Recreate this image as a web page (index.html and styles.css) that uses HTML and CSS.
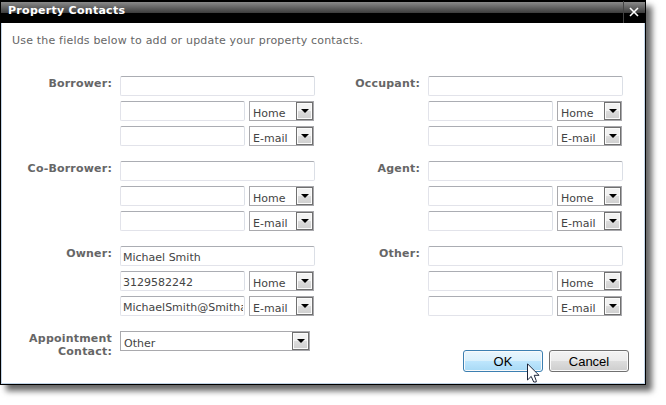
FILE: index.html
```html
<!DOCTYPE html>
<html lang="en">
<head>
    <meta charset="UTF-8">
    <title>Property Contacts</title>
    <link rel="stylesheet" href="styles.css">
</head>
<body>
    <div class="dialog">
        <div class="dialog-header">
            <div class="dialog-title">Property Contacts</div>
            <div class="dialog-close">
                <svg width="10" height="10" viewBox="0 0 10 10">
                    <path d="M1 1L9 9M9 1L1 9" stroke="#fff" stroke-width="1.6" fill="none"/>
                </svg>
            </div>
        </div>
        <div class="dialog-body">
            <p class="intro">Use the fields below to add or update your property contacts.</p>
            <div class="contacts">
                <div class="contact">
                    <label class="contact-label">Borrower:</label>
                    <div class="fields">
                        <input type="text" class="full">
                        <div class="row"><input type="text"><div class="select"><span>Home</span><i class="drop"></i></div></div>
                        <div class="row"><input type="text"><div class="select"><span>E-mail</span><i class="drop"></i></div></div>
                    </div>
                </div>
                <div class="contact">
                    <label class="contact-label">Occupant:</label>
                    <div class="fields">
                        <input type="text" class="full">
                        <div class="row"><input type="text"><div class="select"><span>Home</span><i class="drop"></i></div></div>
                        <div class="row"><input type="text"><div class="select"><span>E-mail</span><i class="drop"></i></div></div>
                    </div>
                </div>
                <div class="contact">
                    <label class="contact-label">Co-Borrower:</label>
                    <div class="fields">
                        <input type="text" class="full">
                        <div class="row"><input type="text"><div class="select"><span>Home</span><i class="drop"></i></div></div>
                        <div class="row"><input type="text"><div class="select"><span>E-mail</span><i class="drop"></i></div></div>
                    </div>
                </div>
                <div class="contact">
                    <label class="contact-label">Agent:</label>
                    <div class="fields">
                        <input type="text" class="full">
                        <div class="row"><input type="text"><div class="select"><span>Home</span><i class="drop"></i></div></div>
                        <div class="row"><input type="text"><div class="select"><span>E-mail</span><i class="drop"></i></div></div>
                    </div>
                </div>
                <div class="contact">
                    <label class="contact-label">Owner:</label>
                    <div class="fields">
                        <input type="text" class="full" value="Michael Smith">
                        <div class="row"><input type="text" value="3129582242"><div class="select"><span>Home</span><i class="drop"></i></div></div>
                        <div class="row"><input type="text" value="MichaelSmith@Smithan.com"><div class="select"><span>E-mail</span><i class="drop"></i></div></div>
                    </div>
                </div>
                <div class="contact">
                    <label class="contact-label">Other:</label>
                    <div class="fields">
                        <input type="text" class="full">
                        <div class="row"><input type="text"><div class="select"><span>Home</span><i class="drop"></i></div></div>
                        <div class="row"><input type="text"><div class="select"><span>E-mail</span><i class="drop"></i></div></div>
                    </div>
                </div>
            </div>
            <div class="footer">
                <div class="contact">
                    <label class="contact-label">Appointment Contact:</label>
                    <div class="select select-wide"><span>Other</span><i class="drop"></i></div>
                </div>
                <div class="buttons">
                    <button class="btn btn-ok">OK</button>
                    <button class="btn">Cancel</button>
                </div>
            </div>
        </div>
        <svg class="cursor" width="13" height="20" viewBox="0 0 13 20">
            <path d="M0.5 0.8V17L4.2 13.4L6.7 19H9.2V17.6L7.2 12.3H12Z" fill="#fff" stroke="#1c2438" stroke-width="1"/>
        </svg>
    </div>
</body>
</html>
```
FILE: styles.css
```css
body {
    margin: 0;
    min-height: 100vh;
    background: #fff;
    font-family: Verdana, "DejaVu Sans", sans-serif;
    font-size: 11px;
    color: #666;
}
.dialog {
    position: relative;
    box-sizing: border-box;
    width: 646px;
    height: 385px;
    border: 1px solid #000;
    background: #fff;
    box-shadow: 6px 6px 6px rgba(0, 0, 0, 0.6);
}
.dialog-header {
    display: flex;
    height: 22px;
    background: linear-gradient(#000 1px, #8a8a8a 1px, #3c3c3c 12px, #000 12px);
    color: #fff;
}
.dialog-title {
    flex: 1;
    padding-left: 7px;
    font-weight: bold;
    line-height: 19px;
    letter-spacing: 0.28px;
}
.dialog-close {
    display: flex;
    align-items: center;
    justify-content: center;
    box-sizing: border-box;
    width: 22px;
    padding-right: 1px;
    border-left: 1px solid #444;
}
.dialog-body {
    box-sizing: border-box;
    height: 361px;
    border: 1px solid #c3d5e8;
    border-top: none;
}
.intro {
    margin: 0;
    padding: 11px 0 0 10px;
    line-height: 14px;
    letter-spacing: 0.19px;
}
.contacts {
    display: grid;
    grid-template-columns: 308px 308px;
    row-gap: 15px;
    padding-top: 28px;
}
.contact {
    display: flex;
    gap: 8px;
}
.contact-label {
    flex-shrink: 0;
    width: 110px;
    line-height: 13px;
    padding-top: 1px;
    font-weight: bold;
    letter-spacing: 0.2px;
    text-align: right;
}
.fields {
    display: flex;
    flex-direction: column;
    gap: 5px;
}
.row {
    display: flex;
    gap: 4px;
}
input {
    box-sizing: border-box;
    width: 125px;
    height: 20px;
    padding: 2px 1px 0 2px;
    border: 1px solid #e2e3ea;
    border-top-color: #abadb3;
    border-right-color: #dbdfe6;
    border-radius: 2px;
    background: #fff;
    font: inherit;
    color: #444;
}
.full {
    width: 195px;
}
.select {
    box-sizing: border-box;
    display: flex;
    justify-content: space-between;
    width: 65px;
    height: 20px;
    border: 1px solid #a9a9ad;
    color: #444;
}
.select span {
    padding-left: 3px;
    line-height: 23px;
}
.select-wide {
    width: 190px;
}
.drop {
    box-sizing: border-box;
    display: flex;
    align-items: center;
    justify-content: center;
    width: 17px;
    height: 18px;
    border: 1px solid #707070;
    background: linear-gradient(#f2f2f2 50%, #dddddd 50%, #cfcfcf);
    box-shadow: inset 0 0 0 1px #fbfbfb;
}
.drop::after {
    content: "";
    border: 4px solid transparent;
    border-top-color: #000;
    border-bottom: none;
}
.footer {
    display: flex;
    justify-content: space-between;
    padding: 15px 15px 0 0;
}
.buttons {
    display: flex;
    gap: 6px;
    padding-top: 19px;
}
.btn {
    width: 80px;
    height: 22px;
    padding: 0;
    border: 1px solid #707070;
    border-radius: 3px;
    background: linear-gradient(#f3f3f3, #ebebeb 50%, #dddddd 50%, #cdcdcd);
    box-shadow: inset 0 0 0 1px #fafafa;
    font: 13px "Liberation Sans", Arial, sans-serif;
    color: #000;
}
.btn-ok {
    border-color: #3c7fb1;
    background: linear-gradient(#eaf6fd, #d9f0fc 50%, #bee6fd 50%, #a7d9f5);
}
.cursor {
    position: absolute;
    left: 526px;
    top: 362px;
}
```
